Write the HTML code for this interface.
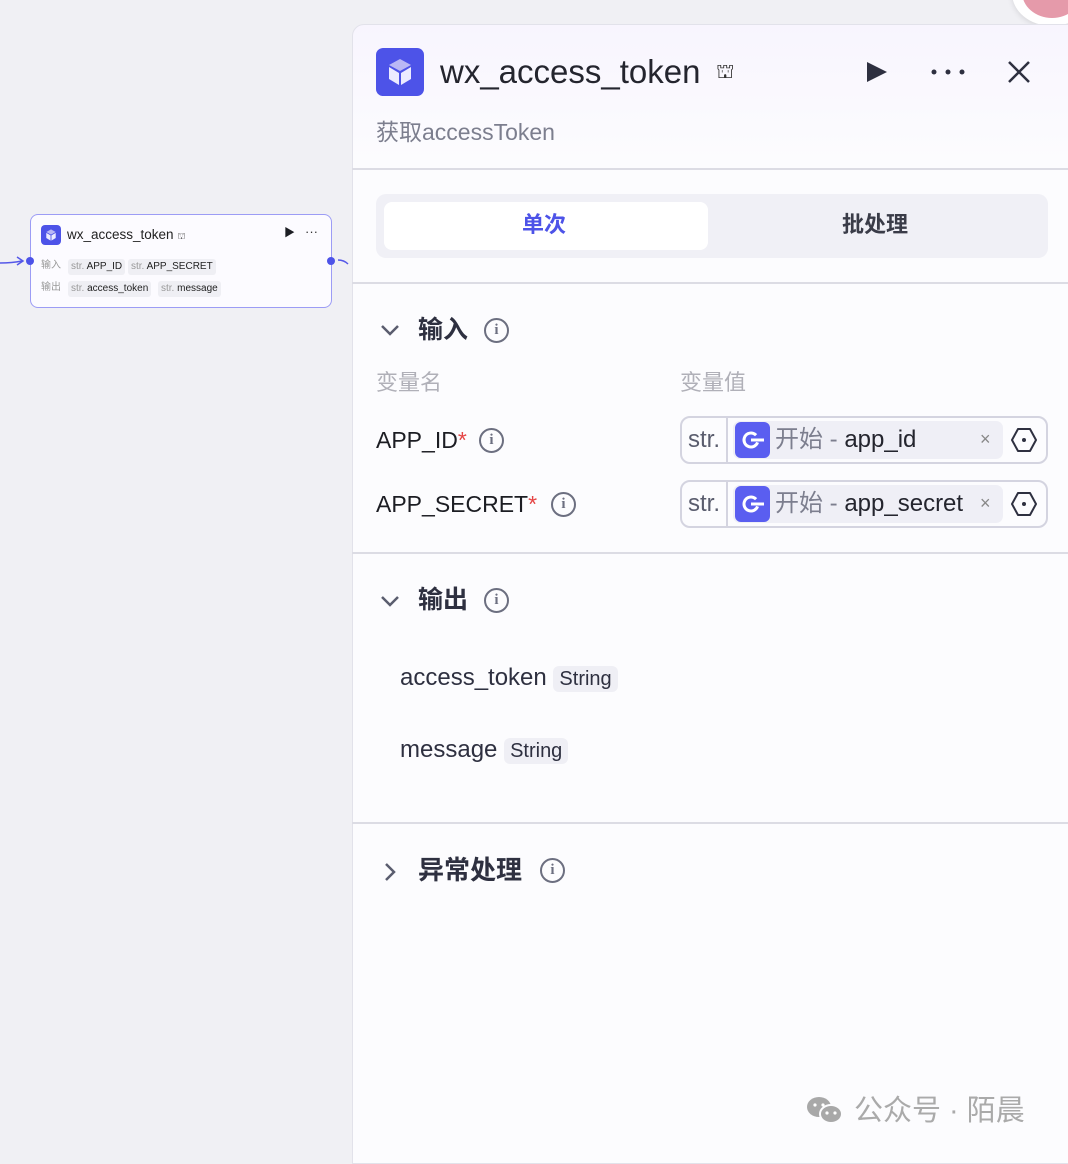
<!DOCTYPE html>
<html><head><meta charset="utf-8"><style>
*{margin:0;padding:0;box-sizing:border-box}
body{width:1068px;height:1154px;overflow:hidden;background:#f0f0f4;font-family:"Liberation Sans","Noto Sans CJK SC",sans-serif;position:relative;color:#1c1d23}
.a{position:absolute;white-space:nowrap;line-height:1.2}
.panel{position:absolute;left:352px;top:24px;width:740px;height:1140px;background:linear-gradient(#f8f5fe 0,#fcfcfe 140px,#fcfcfe);border:1px solid #e2e2ea;border-radius:12px 0 0 0}
.sep{position:absolute;left:352px;width:716px;height:2px;background:#dcdce4}
.info{position:absolute;width:25px;height:25px;border:2px solid #6c6f80;border-radius:50%;color:#6c6f80;font:bold 15px/21px "Liberation Serif",serif;text-align:center}
.pill{background:#efeff5;border-radius:6px;padding:2px 6px}
.node{position:absolute;left:30px;top:214px;width:302px;height:94px;background:#fcfbff;border:1.5px solid #9c9cf5;border-radius:8px}
.tag{position:absolute;background:#efeff4;border-radius:3px;font-size:10px;padding:2px 3px;color:#222;line-height:12px}
.tag i{font-style:normal;color:#999}
.field{position:absolute;left:680px;width:368px;height:48px;border:2px solid #d4d4e0;border-radius:10px;background:#fcfcfe}
.ft{position:absolute;font-size:24px;line-height:30px;white-space:nowrap}
</style></head><body>
<svg class="a" style="left:0;top:250px" width="30" height="24"><path d="M0 13 Q12 13 22 11" stroke="#5558e8" stroke-width="1.5" fill="none"/><path d="M17 7 L23 11 L17 15" stroke="#5558e8" stroke-width="1.5" fill="none"/></svg>
<svg class="a" style="left:336px;top:255px" width="16" height="14"><path d="M2 5 Q8 5 12 9" stroke="#5558e8" stroke-width="1.5" fill="none"/></svg>
<div class="node">
 <div class="a" style="left:10px;top:10px;width:20px;height:20px;background:#4d53e8;border-radius:4px"></div>
 <svg class="a" style="left:14px;top:13px" width="12" height="14" viewBox="0 0 28 32"><path d="M14 3 L25 9 L14 15 L3 9Z" fill="#b9b8f5"/><path d="M3 11 L13 17 L13 29 L3 23Z" fill="#ececff"/><path d="M15 17 L25 11 L25 23 L15 29Z" fill="#ececff"/></svg>
 <div class="a" style="left:36px;top:12px;font-size:13.5px;color:#222">wx_access_token <span style="font-size:9px;color:#555">⛫</span></div>
 <div class="a" style="left:253px;top:12px;font-size:11px">▶</div>
 <div class="a" style="left:274px;top:9px;font-size:13px;color:#333">···</div>
 <div class="a" style="left:10px;top:45px;font-size:10px;color:#999">输入</div>
 <div class="tag" style="left:37px;top:44px"><i>str.</i> APP_ID</div>
 <div class="tag" style="left:97px;top:44px"><i>str.</i> APP_SECRET</div>
 <div class="a" style="left:10px;top:67px;font-size:10px;color:#999">输出</div>
 <div class="tag" style="left:37px;top:66px"><i>str.</i> access_token</div>
 <div class="tag" style="left:127px;top:66px"><i>str.</i> message</div>
</div>
<div class="a" style="left:26px;top:257px;width:8px;height:8px;border-radius:50%;background:#4d53e8"></div>
<div class="a" style="left:327px;top:257px;width:8px;height:8px;border-radius:50%;background:#4d53e8"></div>

<div class="a" style="left:1012px;top:-40px;width:80px;height:66px;border-radius:50%;background:#fff;box-shadow:0 2px 6px rgba(0,0,0,.1)"></div>
<div class="a" style="left:1022px;top:-34px;width:60px;height:52px;border-radius:50%;background:#e59aaa"></div>

<div class="panel"></div>
<div class="a" style="left:376px;top:48px;width:48px;height:48px;background:#4d53e8;border-radius:7px"></div>
<svg class="a" style="left:386px;top:56px" width="28" height="32" viewBox="0 0 28 32"><path d="M14 3 L25 9 L14 15 L3 9Z" fill="#b9b8f5"/><path d="M3 11 L13 17 L13 29 L3 23Z" fill="#ececff"/><path d="M15 17 L25 11 L25 23 L15 29Z" fill="#ececff"/></svg>
<div class="a" style="left:440px;top:52px;font-size:33px;color:#24252e;line-height:40px">wx_access_token</div>
<div class="a" style="left:716px;top:60px;font-size:20px;color:#333">⛫</div>
<svg class="a" style="left:864px;top:60px" width="26" height="24"><path d="M3 2 L23 12 L3 22Z" fill="#2e3040"/></svg>
<svg class="a" style="left:930px;top:68px" width="36" height="8"><circle cx="4" cy="4" r="2.5" fill="#2e3040"/><circle cx="18" cy="4" r="2.5" fill="#2e3040"/><circle cx="32" cy="4" r="2.5" fill="#2e3040"/></svg>
<svg class="a" style="left:1007px;top:60px" width="24" height="24"><path d="M2 2 L22 22 M22 2 L2 22" stroke="#2e3040" stroke-width="2.5"/></svg>
<div class="a" style="left:376px;top:117px;font-size:23px;color:#7c7e8e;line-height:30px">获取accessToken</div>
<div class="sep" style="top:168px"></div>

<div class="a" style="left:376px;top:194px;width:672px;height:64px;background:#f0f0f6;border-radius:10px"></div>
<div class="a" style="left:384px;top:202px;width:324px;height:48px;background:#fff;border-radius:8px"></div>
<div class="a" style="left:522px;top:210px;font-size:22px;line-height:30px;color:#4d53e8;font-weight:bold">单次</div>
<div class="a" style="left:842px;top:210px;font-size:22px;line-height:30px;color:#3a3c48;font-weight:bold">批处理</div>
<div class="sep" style="top:282px"></div>

<svg class="a" style="left:378px;top:320px" width="24" height="20"><path d="M4 6 L12 14 L20 6" stroke="#5a5d6e" stroke-width="2.5" fill="none"/></svg>
<div class="a" style="left:418px;top:313px;font-size:25px;line-height:34px;font-weight:bold;color:#2e3040">输入</div>
<div class="info" style="left:484px;top:318px">i</div>
<div class="a" style="left:376px;top:368px;font-size:22px;line-height:30px;color:#b0b0b8">变量名</div>
<div class="a" style="left:680px;top:368px;font-size:22px;line-height:30px;color:#b0b0b8">变量值</div>
<div class="a" style="left:376px;top:425px;font-size:23px;line-height:30px;color:#1c1d23">APP_ID<span style="color:#e54545">*</span></div>
<div class="info" style="left:479px;top:428px">i</div>
<div class="a" style="left:376px;top:489px;font-size:23px;line-height:30px;color:#1c1d23">APP_SECRET<span style="color:#e54545">*</span></div>
<div class="info" style="left:551px;top:492px">i</div>

<div class="field" style="top:416px"></div>
<div class="field" style="top:480px"></div>
<div class="ft" style="left:688px;top:425px;color:#5a5d6e">str.</div>
<div class="ft" style="left:688px;top:489px;color:#5a5d6e">str.</div>
<div class="a" style="left:726px;top:418px;width:2px;height:44px;background:#d4d4e0"></div>
<div class="a" style="left:726px;top:482px;width:2px;height:44px;background:#d4d4e0"></div>
<div class="a" style="left:733px;top:421px;width:270px;height:38px;background:#efeff6;border-radius:7px"></div>
<div class="a" style="left:733px;top:485px;width:270px;height:38px;background:#efeff6;border-radius:7px"></div>
<div class="a" style="left:735px;top:422px;width:35px;height:36px;background:#5a5ef0;border-radius:6px"></div>
<div class="a" style="left:735px;top:486px;width:35px;height:36px;background:#5a5ef0;border-radius:6px"></div>
<svg class="a" style="left:739px;top:428px" width="28" height="24"><circle cx="12" cy="12" r="7" stroke="#fff" stroke-width="3" fill="none" stroke-dasharray="36 8" transform="rotate(20 12 12)"/><path d="M12 12 L25 12" stroke="#fff" stroke-width="3"/></svg>
<svg class="a" style="left:739px;top:492px" width="28" height="24"><circle cx="12" cy="12" r="7" stroke="#fff" stroke-width="3" fill="none" stroke-dasharray="36 8" transform="rotate(20 12 12)"/><path d="M12 12 L25 12" stroke="#fff" stroke-width="3"/></svg>
<div class="ft" style="left:775px;top:425px;color:#7c7e8e">开始 - <span style="color:#24252e">app_id</span></div>
<div class="ft" style="left:775px;top:489px;color:#7c7e8e">开始 - <span style="color:#24252e">app_secret</span></div>
<div class="a" style="left:980px;top:429px;font-size:18px;color:#888">×</div>
<div class="a" style="left:980px;top:493px;font-size:18px;color:#888">×</div>
<svg class="a" style="left:1010px;top:426px" width="28" height="28"><path d="M8 3 H20 L26 14 L20 25 H8 L2 14Z" stroke="#2e3040" stroke-width="2" fill="none" stroke-linejoin="round"/><circle cx="14" cy="14" r="2" fill="#2e3040"/></svg>
<svg class="a" style="left:1010px;top:490px" width="28" height="28"><path d="M8 3 H20 L26 14 L20 25 H8 L2 14Z" stroke="#2e3040" stroke-width="2" fill="none" stroke-linejoin="round"/><circle cx="14" cy="14" r="2" fill="#2e3040"/></svg>
<div class="sep" style="top:552px"></div>

<svg class="a" style="left:378px;top:591px" width="24" height="20"><path d="M4 6 L12 14 L20 6" stroke="#5a5d6e" stroke-width="2.5" fill="none"/></svg>
<div class="a" style="left:418px;top:583px;font-size:25px;line-height:34px;font-weight:bold;color:#2e3040">输出</div>
<div class="info" style="left:484px;top:588px">i</div>
<div class="a" style="left:400px;top:662px;font-size:24px;line-height:32px;color:#2e3040">access_token <span class="pill" style="font-size:20px">String</span></div>
<div class="a" style="left:400px;top:734px;font-size:24px;line-height:32px;color:#2e3040">message <span class="pill" style="font-size:20px">String</span></div>
<div class="sep" style="top:822px"></div>

<svg class="a" style="left:380px;top:860px" width="20" height="24"><path d="M6 4 L14 12 L6 20" stroke="#5a5d6e" stroke-width="2.5" fill="none"/></svg>
<div class="a" style="left:418px;top:853px;font-size:26px;line-height:34px;font-weight:bold;color:#2e3040">异常处理</div>
<div class="info" style="left:540px;top:858px">i</div>

<svg class="a" style="left:804px;top:1094px" width="42" height="34"><ellipse cx="15" cy="13" rx="12" ry="10" fill="#a8a8a8"/><ellipse cx="27" cy="20" rx="11" ry="9" fill="#a8a8a8" stroke="#fcfcfe" stroke-width="2"/><circle cx="23" cy="19" r="1.6" fill="#fff"/><circle cx="31" cy="19" r="1.6" fill="#fff"/><circle cx="11" cy="11" r="1.6" fill="#fff"/><circle cx="19" cy="11" r="1.6" fill="#fff"/></svg>
<div class="a" style="left:854px;top:1093px;font-size:29px;line-height:36px;color:#aaa">公众号 · 陌晨</div>
</body></html>
